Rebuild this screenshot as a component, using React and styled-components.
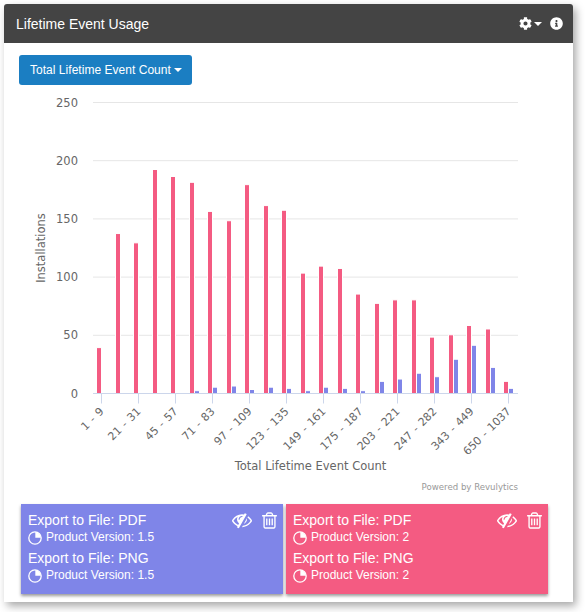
import React from 'react';
import styled, {createGlobalStyle} from 'styled-components';
import {FaCog, FaInfoCircle} from 'react-icons/fa';

const RED = '#f45b82';
const BLUE = '#7f85e8';

const GlobalStyle = createGlobalStyle`
  html, body {
    margin: 0;
    background: #fff;
  }
  body {
    font-family: 'Liberation Sans', Arial, sans-serif;
  }
`;

const Page = styled.div`
  width: 585px;
  height: 612px;
  padding: 4px 12px 0 4px;
  box-sizing: border-box;
  overflow: hidden;
`;

const Panel = styled.div`
  background: #fff;
  height: 598px;
  box-shadow: 3px 4px 8px rgba(0, 0, 0, 0.35);
  border-radius: 3px 3px 0 0;
`;

const Header = styled.div`
  height: 39px;
  background: #444;
  border-radius: 3px 3px 0 0;
  color: #fff;
  display: flex;
  align-items: center;
  justify-content: space-between;
  padding: 0 10px 0 12px;
`;

const Title = styled.div`
  font-size: 14px;
`;

const HeaderTools = styled.div`
  display: flex;
  align-items: center;
  font-size: 13px;
  gap: 8px;
`;

const Gear = styled.span`
  display: flex;
  align-items: center;
  gap: 2px;
`;

const Caret = styled.span`
  display: inline-block;
  width: 0;
  height: 0;
  border-left: 4px solid transparent;
  border-right: 4px solid transparent;
  border-top: 4px solid #fff;
`;

const Body = styled.div`
  padding: 12px 25px 0 15px;
`;

const DropButton = styled.div`
  display: inline-flex;
  align-items: center;
  gap: 3px;
  height: 30px;
  padding: 0 10px 0 11px;
  background: #1b7ec2;
  border-radius: 3px;
  color: #fff;
  font-size: 12px;
  letter-spacing: 0.03px;
`;

const ChartSvg = styled.svg`
  display: block;
  margin-left: -19px;
  font-family: 'DejaVu Sans', sans-serif;
`;

const Cards = styled.div`
  display: flex;
  gap: 3px;
  margin-left: 2px;
`;

const Card = styled.div`
  width: 262px;
  height: 90px;
  box-sizing: border-box;
  background: ${props => props.color};
  color: #fff;
  padding: 8px 7px 0;
  box-shadow: 0 2px 3px rgba(0, 0, 0, 0.4);
  position: relative;
`;

const CardIcons = styled.div`
  position: absolute;
  top: 6px;
  right: 4px;
  display: flex;
  align-items: center;
  gap: 8px;
`;

const ExportName = styled.div`
  font-size: 14px;
  line-height: 17px;
`;

const Version = styled.div`
  display: flex;
  align-items: center;
  gap: 4px;
  font-size: 12px;
  line-height: 17px;
  margin-bottom: 4px;
`;

const TickLabel = styled.text`
  font-size: 11px;
  fill: #666;
  word-spacing: 1px;
  text-anchor: end;
`;

const PieIcon = () => (
  <svg width="14" height="14" viewBox="0 0 14 14">
    <circle cx="7" cy="7" r="6.2" fill="none" stroke="#fff" strokeWidth="1.3" />
    <path d="M7.3 1 A6 6 0 0 1 13 6.7 L7.3 6.7 Z" fill="#fff" />
  </svg>
);

const EyeSlashIcon = () => (
  <svg width="20" height="20" viewBox="0 0 1792 1792" fill="#fff">
    <path d="M555 1335l78-141q-87-63-136-159t-49-203q0-121 61-225-229 117-381 353 167 258 427 375zm389-759q0-20-14-34t-34-14q-125 0-214.500 89.500t-89.500 214.500q0 20 14 34t34 14 34-14 14-34q0-86 61-147t147-61q20 0 34-14t14-34zm363-191q0 7-1 9-106 189-316 567t-315 566l-49 89q-10 16-28 16-12 0-134-70-16-10-16-28 0-12 44-87-143-65-263.500-173t-208.500-245q-20-31-20-69t20-69q153-235 380-371t496-136q89 0 180 17l54-97q10-16 28-16 5 0 18 6t31 15.500 33 18.500 31.500 18.500 19.500 11.500q16 10 16 27zm37 447q0 139-79 253.500t-209 164.500l280-502q8 45 8 84zm448 128q0 35-20 69-39 64-109 145-150 172-347.500 267t-419.500 95l74-132q212-18 392.500-137t301.500-307q-115-179-282-294l63-112q95 64 182.500 153t144.500 184q20 34 20 69z" />
  </svg>
);

const TrashIcon = () => (
  <svg width="19" height="19" viewBox="0 0 1792 1792" fill="#fff">
    <path d="M704 736v576q0 14-9 23t-23 9h-64q-14 0-23-9t-9-23v-576q0-14 9-23t23-9h64q14 0 23 9t9 23zm256 0v576q0 14-9 23t-23 9h-64q-14 0-23-9t-9-23v-576q0-14 9-23t23-9h64q14 0 23 9t9 23zm256 0v576q0 14-9 23t-23 9h-64q-14 0-23-9t-9-23v-576q0-14 9-23t23-9h64q14 0 23 9t9 23zm128 724v-948h-896v948q0 22 7 40.500t14.500 27 10.500 8.500h832q3 0 10.500-8.500t14.500-27 7-40.500zm-672-1076h448l-48-117q-7-9-17-11h-317q-10 2-17 11zm928 32v64q0 14-9 23t-23 9h-96v948q0 83-47 143.500t-113 60.500h-832q-66 0-113-58.500t-47-141.500v-952h-96q-14 0-23-9t-9-23v-64q0-14 9-23t23-9h309l70-167q15-37 54-63t79-26h320q40 0 79 26t54 63l70 167h309q14 0 23 9t9 23z" />
  </svg>
);

const redValues = [39, 137, 129, 192, 186, 181, 156, 148, 179, 161, 157, 103, 109, 107, 85, 77, 80, 80, 48, 50, 58, 55, 10];
const blueValues = [0, 0, 0, 0, 0, 2, 5, 6, 3, 5, 4, 2, 5, 4, 2, 10, 12, 17, 14, 29, 41, 22, 4];
const tickLabels = ['1 - 9', '21 - 31', '45 - 57', '71 - 83', '97 - 109', '123 - 135', '149 - 161', '175 - 187', '203 - 221', '247 - 282', '343 - 449', '650 - 1037'];

const yFor = v => 393.5 - v * 1.164;

const Bar = ({x, value, color}) => (
  <rect
    x={Math.round(x) - 0.5}
    y={yFor(value) - 0.5}
    width="5"
    height={value * 1.164 + 0.5}
    fill={color}
    stroke="#fff"
  />
);

const Chart = () => (
  <ChartSvg width="555" height="419" viewBox="0 85 555 419">
    {[50, 100, 150, 200, 250].map(v => (
      <line key={v} x1="93" x2="518" y1={yFor(v)} y2={yFor(v)} stroke="#e6e6e6" />
    ))}
    {[0, 50, 100, 150, 200, 250].map(v => (
      <text key={v} x="78" y={yFor(v) + 4} textAnchor="end" fontSize="11.5" fill="#666">
        {v}
      </text>
    ))}
    <text transform="translate(45 248) rotate(-90)" textAnchor="middle" fontSize="11.5" fill="#666">
      Installations
    </text>
    {redValues.map((v, i) => (
      <Bar key={i} x={97 + i * 18.5} value={v} color={RED} />
    ))}
    {blueValues.map((v, i) =>
      v > 0 ? <Bar key={i} x={102 + i * 18.5} value={v} color={BLUE} /> : null,
    )}
    <line x1="93" x2="518" y1="393.5" y2="393.5" stroke="#ccd6eb" />
    {tickLabels.map((label, i) => {
      const x = 101.5 + i * 37;
      return (
        <g key={label}>
          <line x1={x} x2={x} y1="393.5" y2="403.5" stroke="#ccd6eb" />
          <TickLabel transform={`translate(${x + 3} 412) rotate(-45)`}>{label}</TickLabel>
        </g>
      );
    })}
    <text x="310.5" y="470" textAnchor="middle" fontSize="11.5" fill="#666">
      Total Lifetime Event Count
    </text>
    <text x="518" y="490" textAnchor="end" fontSize="8.6" fill="#999">
      Powered by Revulytics
    </text>
  </ChartSvg>
);

const ExportCard = ({color, version}) => (
  <Card color={color}>
    <CardIcons>
      <EyeSlashIcon />
      <TrashIcon />
    </CardIcons>
    <ExportName>Export to File: PDF</ExportName>
    <Version>
      <PieIcon />
      Product Version: {version}
    </Version>
    <ExportName>Export to File: PNG</ExportName>
    <Version>
      <PieIcon />
      Product Version: {version}
    </Version>
  </Card>
);

export default function App() {
  return (
    <Page>
      <GlobalStyle />
      <Panel>
        <Header>
          <Title>Lifetime Event Usage</Title>
          <HeaderTools>
            <Gear>
              <FaCog />
              <Caret />
            </Gear>
            <FaInfoCircle />
          </HeaderTools>
        </Header>
        <Body>
          <DropButton>
            Total Lifetime Event Count <Caret />
          </DropButton>
          <Chart />
          <Cards>
            <ExportCard color={BLUE} version="1.5" />
            <ExportCard color={RED} version="2" />
          </Cards>
        </Body>
      </Panel>
    </Page>
  );
}
